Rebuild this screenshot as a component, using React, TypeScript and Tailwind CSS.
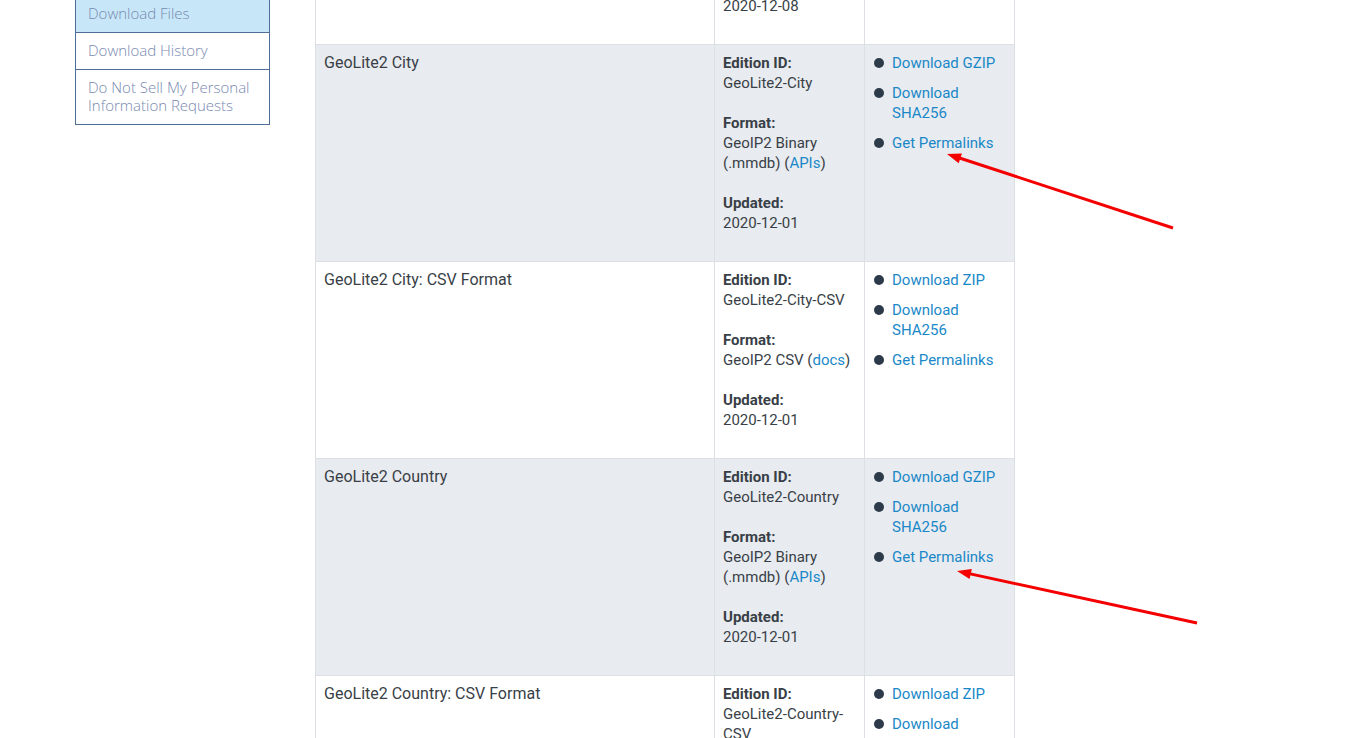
import React from "react";

type Row = {
  name: string;
  edition: string;
  format: string;
  formatLink: string;
  updated: string;
  links: string[];
  gray: boolean;
};

const rows: Row[] = [
  {
    name: "GeoLite2 ASN: CSV Format",
    edition: "GeoLite2-ASN-CSV",
    format: "GeoIP2 CSV",
    formatLink: "docs",
    updated: "2020-12-08",
    links: ["Download ZIP", "Download SHA256", "Get Permalinks"],
    gray: false,
  },
  {
    name: "GeoLite2 City",
    edition: "GeoLite2-City",
    format: "GeoIP2 Binary (.mmdb)",
    formatLink: "APIs",
    updated: "2020-12-01",
    links: ["Download GZIP", "Download SHA256", "Get Permalinks"],
    gray: true,
  },
  {
    name: "GeoLite2 City: CSV Format",
    edition: "GeoLite2-City-CSV",
    format: "GeoIP2 CSV",
    formatLink: "docs",
    updated: "2020-12-01",
    links: ["Download ZIP", "Download SHA256", "Get Permalinks"],
    gray: false,
  },
  {
    name: "GeoLite2 Country",
    edition: "GeoLite2-Country",
    format: "GeoIP2 Binary (.mmdb)",
    formatLink: "APIs",
    updated: "2020-12-01",
    links: ["Download GZIP", "Download SHA256", "Get Permalinks"],
    gray: true,
  },
  {
    name: "GeoLite2 Country: CSV Format",
    edition: "GeoLite2-Country-CSV",
    format: "GeoIP2 CSV",
    formatLink: "docs",
    updated: "2020-12-01",
    links: ["Download ZIP", "Download SHA256", "Get Permalinks"],
    gray: false,
  },
];

const sideItems = [
  { label: "Download Files", active: true },
  { label: "Download History", active: false },
  { label: "Do Not Sell My Personal Information Requests", active: false },
];

function Sidebar() {
  return (
    <ul className="mt-[149px] w-[195px] border border-[#4f6d96] border-t-0 font-['Open_Sans',sans-serif] font-light text-[15px] leading-[18px] text-[#7889b0]">
      {sideItems.map((it, i) => (
        <li
          key={it.label}
          className={
            (it.active ? "bg-[#c7e7f9] " : "bg-white ") +
            (i > 0 ? "border-t border-[#4f6d96] " : "") +
            "px-3 pt-2 pb-[10px]"
          }
        >
          {it.label}
        </li>
      ))}
    </ul>
  );
}

function Cell({ children, className = "" }: { children: React.ReactNode; className?: string }) {
  return (
    <td className={"border border-[#dcdfe3] px-2 pt-2 pb-2 align-top " + className}>{children}</td>
  );
}

export default function App() {
  return (
    <div className="relative h-[738px] overflow-hidden bg-white">
      <div className="-mt-[153px] flex items-start gap-[45px] pl-[75px]">
        <Sidebar />
        <table className="w-[700px] table-fixed border-collapse font-['Roboto',sans-serif] text-[15px] leading-5 text-[#393f47]">
          <colgroup>
            <col className="w-[399px]" />
            <col className="w-[150px]" />
            <col className="w-[150px]" />
          </colgroup>
          <tbody>
            {rows.map((r) => (
              <tr key={r.name} className={r.gray ? "bg-[#e8ebef]" : "bg-white"}>
                <Cell className="text-[16px]">{r.name}</Cell>
                <Cell>
                  <p className="mb-5">
                    <strong className="font-bold">Edition ID:</strong>
                    <br />
                    {r.edition}
                  </p>
                  <p className="mb-5">
                    <strong className="font-bold">Format:</strong>
                    <br />
                    {r.format} (<a className="text-[#1a88c8]">{r.formatLink}</a>)
                  </p>
                  <p className="mb-5">
                    <strong className="font-bold">Updated:</strong>
                    <br />
                    {r.updated}
                  </p>
                </Cell>
                <Cell>
                  <ul className="flex flex-col gap-[10px]">
                    {r.links.map((l) => (
                      <li key={l} className="flex items-start">
                        <span className="ml-px mr-[8px] mt-[5px] h-[10px] w-[10px] shrink-0 rounded-full bg-[#2c3a4a]" />
                        <a className="text-[#1a88c8]">{l}</a>
                      </li>
                    ))}
                  </ul>
                </Cell>
              </tr>
            ))}
          </tbody>
        </table>
      </div>

      <svg className="pointer-events-none absolute left-0 top-0" width="1365" height="738">
        <line x1="1173" y1="228" x2="958" y2="157.5" stroke="#f40000" strokeWidth="3" />
        <polygon points="947,154 962,153.4 958.7,163.3" fill="#f40000" />
        <line x1="1197" y1="623" x2="968" y2="573.4" stroke="#f40000" strokeWidth="3" />
        <polygon points="957,571 971.8,568.9 969.6,579.1" fill="#f40000" />
      </svg>
    </div>
  );
}
